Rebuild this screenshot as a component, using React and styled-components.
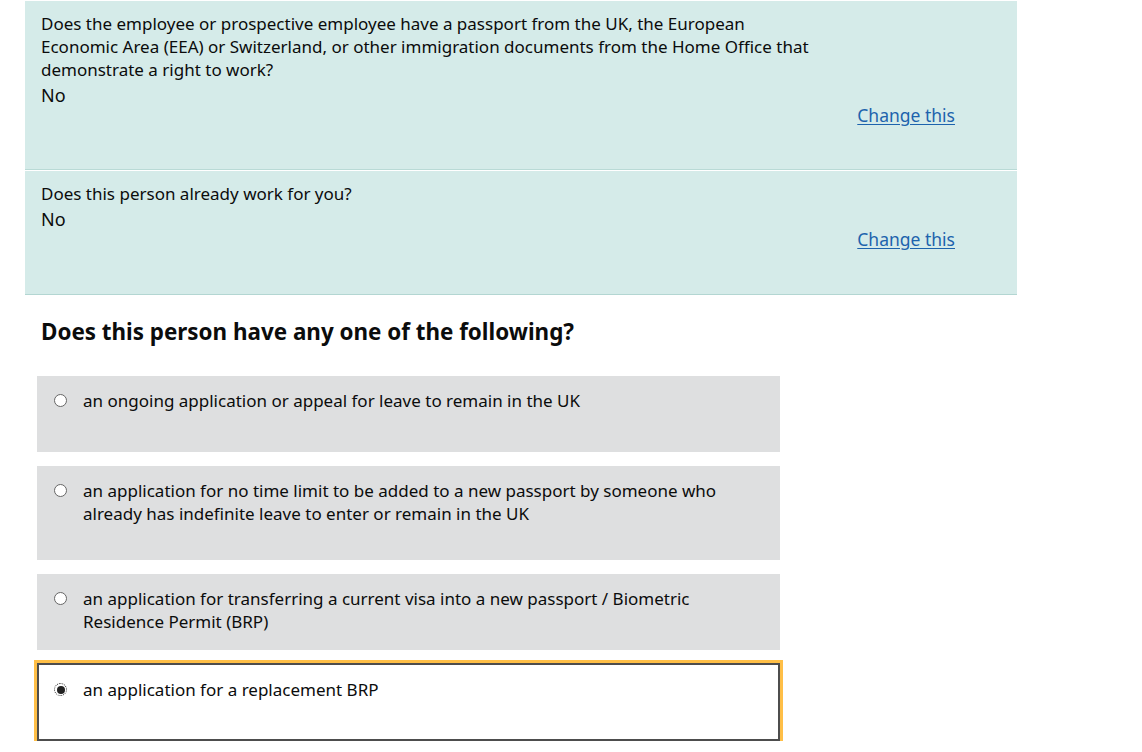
import React from 'react';
import styled, { createGlobalStyle } from 'styled-components';

const GlobalStyle = createGlobalStyle`
  html, body {
    margin: 0;
    padding: 0;
    background: #fff;
  }
  body {
    font-family: 'Noto Sans', 'Open Sans', Arial, sans-serif;
    color: #0b0c0c;
  }
`;

const Page = styled.main`
  padding: 1px 0 0 25px;
  width: 992px;
`;

const Summary = styled.section`
  background: #d5ebe9;
  border-bottom: 1px solid #b3d6d2;
`;

const Row = styled.div`
  padding: 11px 16px ${(p) => p.$bottom}px 16px;
  border-bottom: ${(p) => (p.$divider ? '1px solid #b9dad6' : 'none')};
  box-shadow: ${(p) => (p.$divider ? '0 1px 0 #fff' : 'none')};
  margin-bottom: ${(p) => (p.$divider ? '1px' : '0')};
`;

const Question = styled.div`
  font-size: 17px;
  line-height: 23px;
  max-width: 780px;
`;

const Answer = styled.div`
  font-size: 18px;
  line-height: 26px;
  margin-top: 1px;
`;

const LinkWrap = styled.div`
  display: flex;
  justify-content: flex-end;
  padding-right: 46px;
  margin-top: -5px;
`;

const ChangeLink = styled.a`
  font-size: 17.5px;
  line-height: 24px;
  color: #1d63ad;
  text-decoration: underline;
  text-underline-offset: 2px;
`;

const Fieldset = styled.fieldset`
  border: 0;
  margin: 0;
  padding: 0;
`;

const Legend = styled.legend`
  font-size: 22.4px;
  font-weight: 700;
  line-height: 30px;
  padding: 22px 0 0 16px;
  margin: 0 0 29px;
`;

const Options = styled.div`
  display: flex;
  flex-direction: column;
  gap: 14px;
  padding-left: 12px;
  width: 743px;
`;

const Option = styled.label`
  display: flex;
  align-items: flex-start;
  gap: 16px;
  box-sizing: border-box;
  height: ${(p) => p.$h}px;
  padding: 13px 20px 0 ${(p) => (p.$selected ? 15 : 17)}px;
  background: ${(p) => (p.$selected ? '#fff' : '#dedfe0')};
  border: ${(p) => (p.$selected ? '2px solid #4d4d4d' : '0')};
  outline: ${(p) => (p.$selected ? '3px solid #ffbf47' : 'none')};
  margin-top: ${(p) => (p.$selected ? '-1px' : '0')};
  font-size: 17px;
  line-height: 23px;
`;

const Radio = styled.span`
  flex: none;
  box-sizing: border-box;
  width: 13px;
  height: 13px;
  margin-top: 5px;
  border-radius: 50%;
  border: 1px ${(p) => (p.$checked ? 'dotted #222' : 'solid #666')};
  background: #fff;
  display: flex;
  align-items: center;
  justify-content: center;

  &::after {
    content: '';
    display: ${(p) => (p.$checked ? 'block' : 'none')};
    width: 8px;
    height: 8px;
    border-radius: 50%;
    background: #222;
  }
`;

const Text = styled.span`
  max-width: 672px;
`;

const rows = [
  {
    q: 'Does the employee or prospective employee have a passport from the UK, the European Economic Area (EEA) or Switzerland, or other immigration documents from the Home Office that demonstrate a right to work?',
    a: 'No',
    bottom: 42,
    divider: true,
  },
  {
    q: 'Does this person already work for you?',
    a: 'No',
    bottom: 43,
  },
];

const options = [
  { label: 'an ongoing application or appeal for leave to remain in the UK', h: 76 },
  { label: 'an application for no time limit to be added to a new passport by someone who already has indefinite leave to enter or remain in the UK', h: 94 },
  { label: 'an application for transferring a current visa into a new passport / Biometric Residence Permit (BRP)', h: 76 },
  { label: 'an application for a replacement BRP', h: 78, selected: true },
];

const App = () => {
  return (
    <Page>
      <GlobalStyle />
      <Summary>
        {rows.map((r, i) => (
          <Row key={i} $bottom={r.bottom} $divider={r.divider}>
            <Question>{r.q}</Question>
            <Answer>{r.a}</Answer>
            <LinkWrap>
              <ChangeLink href="#">Change this</ChangeLink>
            </LinkWrap>
          </Row>
        ))}
      </Summary>
      <Fieldset>
        <Legend>Does this person have any one of the following?</Legend>
        <Options>
          {options.map((o, i) => (
            <Option key={i} $h={o.h} $selected={o.selected}>
              <Radio $checked={o.selected} />
              <Text>{o.label}</Text>
            </Option>
          ))}
        </Options>
      </Fieldset>
    </Page>
  );
};

export default App;
